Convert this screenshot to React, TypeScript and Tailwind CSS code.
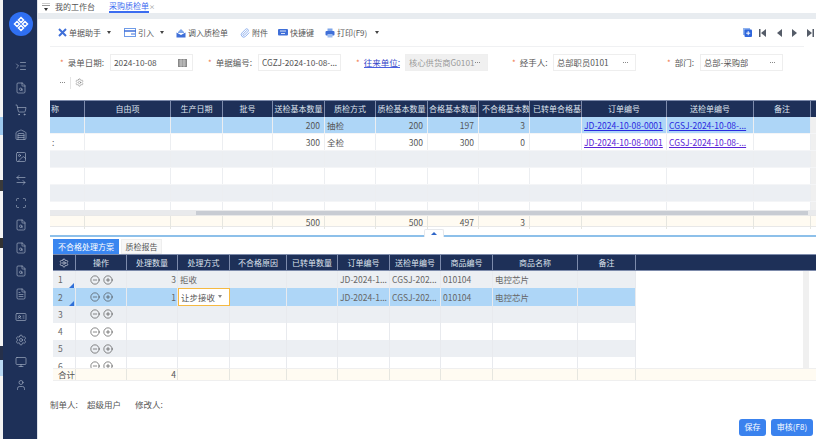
import {
  ArrowLeftRight,
  CircleMinus,
  CirclePlus,
  FileSearch,
  FileText,
  IdCard,
  Image,
  ListIndentIncrease,
  Monitor,
  Paperclip,
  Scan,
  Settings,
  ShoppingCart,
  User,
  Warehouse,
} from "lucide-react";
import type { ReactNode } from "react";

const FONT = "font-['Noto_Sans_CJK_SC','Noto_Sans',sans-serif]";
const UPPER_COLS = "grid grid-cols-[35px_86px_52px_50px_52px_51px_52px_51px_51px_52px_85px_87px_57px_5px]";
const LOWER_COLS = "grid grid-cols-[23px_51px_51px_52px_57px_51px_52px_51px_52px_85px_58px_173px]";

const sideIcons = [
  { Icon: ListIndentIncrease, cls: "mb-[10px]" },
  { Icon: FileSearch, cls: "mb-[10px]" },
  { Icon: ShoppingCart, cls: "mb-[13px]" },
  { Icon: Warehouse, cls: "mb-[10px]" },
  { Icon: Image, cls: "mb-[11px]" },
  { Icon: ArrowLeftRight, cls: "mb-[11px]" },
  { Icon: Scan, cls: "mb-[10px]" },
  { Icon: FileSearch, cls: "mb-[11px]" },
  { Icon: FileSearch, cls: "mb-[11px]" },
  { Icon: FileSearch, cls: "mb-[11px]" },
  { Icon: FileText, cls: "mb-[11px]" },
  { Icon: IdCard, cls: "mb-[11px]" },
  { Icon: Settings, cls: "mb-[10px]" },
  { Icon: Monitor, cls: "mb-[11px]" },
  { Icon: User, cls: "" },
];

function Sidebar() {
  return (
    <div className="flex w-[38px] shrink-0">
      <div className="flex w-[3px] flex-col bg-[#f4f4f4]">
        <div className="h-[117px]" />
        <div className="h-[18px] bg-[#9cc8ee]" />
        <div className="h-[45px]" />
        <div className="h-[11px] bg-[#3a3a3a]" />
        <div className="h-[47px]" />
        <div className="h-[10px] bg-[#333333]" />
        <div className="h-[98px]" />
        <div className="h-[14px] bg-[#26304a]" />
        <div className="h-[16px] bg-[#b9d9f4]" />
      </div>
      <div className="flex w-[34px] flex-col items-center bg-[#1e3058] pl-[2px] pt-[12px]">
        <div className="mb-[24px] flex h-[24px] w-[24px] shrink-0 items-center justify-center rounded-full bg-[#2f6ff2]">
          <svg width="16" height="16" viewBox="0 0 16 16" fill="none" stroke="white" strokeWidth="1.5">
            <path d="M8 1.5 10.5 4 8 6.5 5.5 4Z" />
            <path d="M8 9.5 10.5 12 8 14.5 5.5 12Z" />
            <path d="M4 5.5 6.5 8 4 10.5 1.5 8Z" />
            <path d="M12 5.5 14.5 8 12 10.5 9.5 8Z" />
          </svg>
        </div>
        {sideIcons.map(({ Icon, cls }, i) => (
          <Icon key={i} size={12} strokeWidth={1.3} className={`${cls} shrink-0 text-[#a9b4c8]`} />
        ))}
      </div>
      <div className="w-px bg-[#dfe3ea]" />
    </div>
  );
}

function Caret() {
  return <span className="inline-block h-0 w-0 border-x-[2.5px] border-t-[3px] border-x-transparent border-t-[#444444]" />;
}

function ToolItem({ icon, label, caret, cls, caretCls = "ml-[6px]" }: { icon: ReactNode; label: string; caret?: boolean; cls: string; caretCls?: string }) {
  return (
    <div className={`flex items-center ${cls}`}>
      {icon}
      <span className="ml-[2px] whitespace-nowrap">{label}</span>
      {caret && <span className={`flex ${caretCls}`}><Caret /></span>}
    </div>
  );
}

function Toolbar() {
  return (
    <div className="mx-[12px] flex h-[28px] items-center border-b border-[#f0f1f3] pl-[8px] text-[8px] text-[#555555]">
      <ToolItem
        cls="mr-[13px]"
        caret
        label="单据助手"
        icon={
          <svg width="9" height="9" viewBox="0 0 9 9" stroke="#3f6fd8" strokeWidth="2">
            <path d="M1 1 8 8M8 1 1 8" />
          </svg>
        }
      />
      <ToolItem
        cls="mr-[12px]"
        caret
        label="引入"
        icon={
          <svg width="12" height="9" viewBox="0 0 12 9" fill="none" stroke="#6f9be8" strokeWidth="1">
            <rect x="0.5" y="0.5" width="11" height="8" />
            <path d="M0 3h12" stroke="#3f6fd8" strokeWidth="1.5" />
            <path d="M7 6h4" stroke="#3f6fd8" />
          </svg>
        }
      />
      <ToolItem
        cls="mr-[12px]"
        label="调入质检单"
        icon={
          <svg width="10" height="10" viewBox="0 0 10 10">
            <path d="M2 4 5 1l3 3v1H2Z" fill="#7fa6ea" />
            <path d="M0.5 4.5 5 7l4.5-2.5V9.5h-9Z" fill="#3f6fd8" />
          </svg>
        }
      />
      <ToolItem cls="mr-[10px]" label="附件" icon={<Paperclip size={10} strokeWidth={1.8} className="text-[#6f9be8]" />} />
      <ToolItem
        cls="mr-[11px]"
        label="快捷键"
        icon={
          <svg width="10" height="8" viewBox="0 0 10 8">
            <rect width="10" height="6.5" rx="1" fill="#3f6fd8" />
            <path d="M2 2h6M3 4.5h4" stroke="white" strokeWidth="0.8" />
          </svg>
        }
      />
      <ToolItem
        cls=""
        caret
        caretCls="ml-[8px]"
        label="打印(F9)"
        icon={
          <svg width="10" height="10" viewBox="0 0 10 10">
            <rect x="2.5" y="0.5" width="5" height="3" fill="#7fa6ea" />
            <rect x="0.5" y="3" width="9" height="4.5" rx="1" fill="#3f6fd8" />
            <rect x="2.5" y="6" width="5" height="3.5" fill="#9dbcf0" />
          </svg>
        }
      />
      <div className="ml-auto mr-[-10px] flex items-center">
        <svg width="9" height="9" viewBox="0 0 9 9" className="mr-[7px]">
          <rect x="0" y="0" width="7" height="7" fill="#8fb2ee" />
          <rect x="1.5" y="1.5" width="7.5" height="7.5" rx="1" fill="#2f66dc" />
          <path d="M5.2 3.2v4M3.2 5.2h4" stroke="white" strokeWidth="1" />
        </svg>
        <svg width="7" height="8" viewBox="0 0 7 8" fill="#555c68" className="mr-[11px]">
          <path d="M0 0h1.5v8H0ZM7 0v8L2 4Z" />
        </svg>
        <svg width="5" height="8" viewBox="0 0 5 8" fill="#555c68" className="mr-[10px]">
          <path d="M5 0v8L0 4Z" />
        </svg>
        <svg width="5" height="8" viewBox="0 0 5 8" fill="#555c68" className="mr-[10px]">
          <path d="M0 0v8l5-4Z" />
        </svg>
        <svg width="7" height="8" viewBox="0 0 7 8" fill="#555c68">
          <path d="M7 0H5.5v8H7ZM0 0v8l5-4Z" />
        </svg>
      </div>
    </div>
  );
}

function Dots() {
  return (
    <span className="flex shrink-0 gap-[1px]">
      <span className="h-px w-px bg-[#888888]" />
      <span className="h-px w-px bg-[#888888]" />
      <span className="h-px w-px bg-[#888888]" />
    </span>
  );
}

function Field({
  label,
  value,
  cls,
  labelCls = "text-[#555555]",
  disabled,
  dots = true,
  icon,
}: {
  label: string;
  value: string;
  cls: string;
  labelCls?: string;
  disabled?: boolean;
  dots?: boolean;
  icon?: ReactNode;
}) {
  return (
    <div className={`flex items-center ${cls}`}>
      <span className="mr-[4px] text-[8px] text-[#f0764a]">*</span>
      <span className={`whitespace-nowrap text-[8.5px] ${labelCls}`}>{label}</span>
      <div
        className={`ml-auto flex h-[17px] w-[83px] items-center justify-between border px-[3px] text-[8.3px] ${
          disabled ? "border-[#efefef] bg-[#f0f0f0] text-[#999999]" : "border-[#eeeeee] bg-white text-[#555555]"
        }`}
      >
        <span className="min-w-0 overflow-hidden whitespace-nowrap">{value}</span>
        {icon ?? (dots && <span className="mr-[4px] flex"><Dots /></span>)}
      </div>
    </div>
  );
}

function Form() {
  return (
    <div className="h-[53px] pl-[22px] pt-[7px]">
      <div className="flex items-center">
        <Field
          cls="mr-[15px] w-[133px]"
          label="录单日期:"
          value="2024-10-08"
          icon={
            <svg width="9" height="9" viewBox="0 0 9 9" fill="#888888" className="mr-[2px]">
              <path d="M0 1h9v8H0Z" />
              <path d="M1 3h7M3 1v8M6 1v8M1 5h7M1 7h7" stroke="#f3f3f3" strokeWidth="0.5" />
            </svg>
          }
        />
        <Field cls="mr-[15px] w-[133px]" label="单据编号:" value="CGZJ-2024-10-08-..." dots={false} />
        <Field
          cls="mr-[24px] w-[132px]"
          label="往来单位:"
          labelCls="border-b border-[#4a5fe0] leading-[10px] text-[#3346c8]"
          value="核心供货商G0101"
          disabled
        />
        <Field cls="mr-[31px] w-[124px]" label="经手人:" value="总部职员0101" />
        <Field cls="w-[116px]" label="部门:" value="总部-采购部" />
      </div>
      <div className="mt-[5px] flex h-[13px] items-center">
        <Dots />
        <span className="ml-[5px] h-[12px] w-px bg-[#e4e4e4]" />
        <Settings size={9} strokeWidth={1.4} className="ml-[4px] text-[#777777]" />
      </div>
    </div>
  );
}

const upperHeads = ["称", "自由项", "生产日期", "批号", "送检基本数量", "质检方式", "质检基本数量", "合格基本数量", "不合格基本数量", "已转单合格基本", "订单编号", "送检单编号", "备注", ""];

function HeadCell({ text, cls = "justify-center" }: { text: string; cls?: string }) {
  return (
    <div className={`flex items-center overflow-hidden whitespace-nowrap border-r border-[#7d8bab] text-[8px] text-[#dfe4ee] last:border-r-0 ${cls}`}>
      {text}
    </div>
  );
}

function UpperRow({ cells, bg, link }: { cells: string[]; bg: string; link: string }) {
  return (
    <div className={`${UPPER_COLS} h-[17px] border-b border-[#f4f5f7] ${bg}`}>
      {cells.map((c, i) => {
        const num = [4, 6, 7, 8].includes(i);
        const isLink = i === 10 || i === 11;
        return (
          <div
            key={i}
            className={`flex items-center overflow-hidden whitespace-nowrap border-r border-[#eceef1] px-[2px] text-[8.5px] text-[#555555] last:border-r-0 last:bg-[#f0f0f0] ${
              num ? "justify-end pr-[4px]" : ""
            }`}
          >
            {isLink ? <span className={`underline ${link}`}>{c}</span> : c}
          </div>
        );
      })}
    </div>
  );
}

const emptyUpper = upperHeads.map(() => "");

function UpperTable() {
  return (
    <div className="ml-[12px]">
      <div className={`${UPPER_COLS} h-[17px] border-t border-[#7d8bab] bg-[#1e3058]`}>
        {upperHeads.map((h, i) => (
          <HeadCell key={i} text={h} cls={i === 0 ? "justify-start pl-px" : i === 8 || i === 9 ? "justify-start pl-[3px]" : "justify-center"} />
        ))}
      </div>
      <UpperRow
        bg="bg-[#aed6f7]"
        link="text-[#2a2ae0]"
        cells={["", "", "", "", "200", "抽检", "200", "197", "3", "", "JD-2024-10-08-0001", "CGSJ-2024-10-08-...", "", ""]}
      />
      <UpperRow
        bg="bg-white"
        link="text-[#5a24d6]"
        cells={[":", "", "", "", "300", "全检", "300", "300", "0", "", "JD-2024-10-08-0001", "CGSJ-2024-10-08-...", "", ""]}
      />
      <UpperRow bg="bg-[#eceff3]" link="" cells={emptyUpper} />
      <UpperRow bg="bg-white" link="" cells={emptyUpper} />
      <UpperRow bg="bg-[#eceff3]" link="" cells={emptyUpper} />
      <div className={`${UPPER_COLS} h-[8px] bg-white`}>
        {upperHeads.map((_, i) => (
          <div key={i} className="border-r border-[#eceef1] last:border-r-0 last:bg-[#f0f0f0]" />
        ))}
      </div>
      <div className="h-[5px] bg-[#e9eaec] pl-[146px] pr-[8px] pt-px">
        <div className="h-[4px] bg-[#c8ccd3]" />
      </div>
      <div className={`${UPPER_COLS} h-[12px] border-y border-[#e8e8e8] bg-[#fffbf2]`}>
        {["", "", "", "", "500", "", "500", "497", "3", "", "", "", "", ""].map((c, i) => (
          <div key={i} className="flex items-center justify-end border-r border-[#e6e6e0] pr-[4px] text-[8.5px] text-[#555555] last:border-r-0">
            {c}
          </div>
        ))}
      </div>
    </div>
  );
}

const lowerHeads = ["", "操作", "处理数量", "处理方式", "不合格原因", "已转单数量", "订单编号", "送检单编号", "商品编号", "商品名称", "备注", ""];

function LowerRow({ n, bg, qty, way, picked, filled, tri }: { n: number; bg: string; qty?: string; way?: string; picked?: boolean; filled?: boolean; tri?: boolean }) {
  const cellCls = "flex items-center overflow-hidden whitespace-nowrap border-r border-[#e8eaee] px-[2px] text-[8.5px] text-[#666666]";
  return (
    <div className={`${LOWER_COLS} h-[17.3px] shrink-0`}>
      <div className={`${cellCls} ${bg} relative pl-[5px]`}>
        {n}
        {tri && <span className="absolute bottom-0 right-px h-0 w-0 border-b-[5px] border-l-[5px] border-b-[#2f6fd8] border-l-transparent" />}
      </div>
      <div className={`${cellCls} ${bg} justify-center gap-[3px]`}>
        <CircleMinus size={10} strokeWidth={1.5} className="shrink-0 text-[#444444]" />
        <CirclePlus size={10} strokeWidth={1.5} className="shrink-0 text-[#444444]" />
      </div>
      <div className={`${cellCls} ${bg} justify-end pr-[1px]`}>{qty}</div>
      {picked ? (
        <div className="flex items-center justify-between border border-[#f5b942] bg-white px-[2px] text-[8.5px] text-[#555555]">
          {way}
          <span className="mr-[5px] flex">
            <span className="h-0 w-0 border-x-[2.5px] border-t-[3px] border-x-transparent border-t-[#888888]" />
          </span>
        </div>
      ) : (
        <div className={`${cellCls} ${bg}`}>{way}</div>
      )}
      <div className={`${cellCls} ${bg}`} />
      <div className={`${cellCls} ${bg}`} />
      <div className={`${cellCls} ${bg}`}>{filled && "JD-2024-1..."}</div>
      <div className={`${cellCls} ${bg}`}>{filled && "CGSJ-202..."}</div>
      <div className={`${cellCls} ${bg}`}>{filled && "010104"}</div>
      <div className={`${cellCls} ${bg}`}>{filled && "电控芯片"}</div>
      <div className={`${cellCls} ${bg}`} />
      <div className="flex justify-end bg-white">
        <div className="w-[6px] bg-[#f0f0f0]" />
      </div>
    </div>
  );
}

function LowerPanel() {
  return (
    <div className="relative mt-[8px] ml-[12px] border-t-2 border-[#8dc0ea] pl-[3px] pt-[2px]">
      <div className="absolute -top-[8px] left-[374px] flex h-[8px] w-[20px] items-center justify-center rounded-t-[2px] border border-b-0 border-[#e6e8ec] bg-white">
        <span className="h-0 w-0 border-x-[3px] border-b-[3px] border-x-transparent border-b-[#2f66c8]" />
      </div>
      <div className="flex h-[15px] items-stretch gap-[2px]">
        <div className="flex w-[66px] items-center justify-center whitespace-nowrap bg-[#3a86f0] text-[8px] text-white">不合格处理方案</div>
        <div className="flex w-[41px] items-center justify-center whitespace-nowrap border border-[#eeeeee] bg-[#f7f7f7] text-[8px] text-[#555555]">质检报告</div>
      </div>
      <div className={`${LOWER_COLS} h-[17px] border-y border-[#7d8bab] bg-[#1e3058]`}>
        {lowerHeads.map((h, i) =>
          i === 0 ? (
            <div key={i} className="flex items-center justify-center border-r border-[#7d8bab]">
              <Settings size={10} strokeWidth={1.6} className="text-[#dfe4ee]" />
            </div>
          ) : (
            <HeadCell key={i} text={h} />
          ),
        )}
      </div>
      <div className="flex h-[97px] flex-col overflow-hidden">
        <LowerRow n={1} bg="bg-[#eceff3]" qty="3" way="拒收" filled tri />
        <LowerRow n={2} bg="bg-[#aed6f7]" qty="1" way="让步接收" picked filled tri />
        <LowerRow n={3} bg="bg-[#eceff3]" />
        <LowerRow n={4} bg="bg-white" />
        <LowerRow n={5} bg="bg-[#eceff3]" />
        <LowerRow n={6} bg="bg-white" />
      </div>
      <div className={`${LOWER_COLS} h-[13px] border-y border-[#efefef] bg-[#fffbf2] text-[8.5px] text-[#555555]`}>
        {["合计", "", "4", "", "", "", "", "", "", "", "", ""].map((c, i) => (
          <div key={i} className={`flex items-center overflow-hidden whitespace-nowrap border-r border-[#e6e6e0] pr-[1px] last:border-r-0 ${i === 0 ? "pl-[5px]" : "justify-end"}`}>
            {c}
          </div>
        ))}
      </div>
    </div>
  );
}

export default function App() {
  return (
    <div className={`flex h-[439px] w-[816px] overflow-hidden bg-white ${FONT}`}>
      <Sidebar />
      <div className="flex min-w-0 flex-1 flex-col">
        <div className="flex h-[13px] items-center overflow-hidden text-[8px] text-[#555555]">
          <svg width="8" height="8" viewBox="0 0 8 8" className="ml-[4px]">
            <path d="M0 0h8M0 2.5h8" stroke="#999999" />
            <path d="M2 5h4L4 8Z" fill="#333333" />
          </svg>
          <span className="ml-[5px] whitespace-nowrap">我的工作台</span>
          <span className="ml-[14px] flex h-[13px] w-[40px] items-center whitespace-nowrap border-b-2 border-[#3b6cf0] pt-[1px] text-[#3b6cf0]">采购质检单</span>
          <span className="text-[6px] text-[#888888]">×</span>
        </div>
        <div className="h-[6px] bg-[#e8ecf0]" />
        <Toolbar />
        <Form />
        <UpperTable />
        <LowerPanel />
        <div className="ml-[12px] mt-[17px] flex text-[8.5px] text-[#555555]">
          <span className="w-[37px]">制单人:</span>
          <span className="w-[48px]">超级用户</span>
          <span>修改人:</span>
        </div>
        <div className="mr-[3px] mt-[8px] flex justify-end gap-[5px]">
          <button className="flex h-[17px] w-[27px] items-center justify-center rounded-[3px] bg-[#3a82ee] text-[8px] text-white">保存</button>
          <button className="flex h-[17px] w-[42px] items-center justify-center rounded-[3px] bg-[#3a82ee] text-[8px] text-white">审核(F8)</button>
        </div>
      </div>
    </div>
  );
}
